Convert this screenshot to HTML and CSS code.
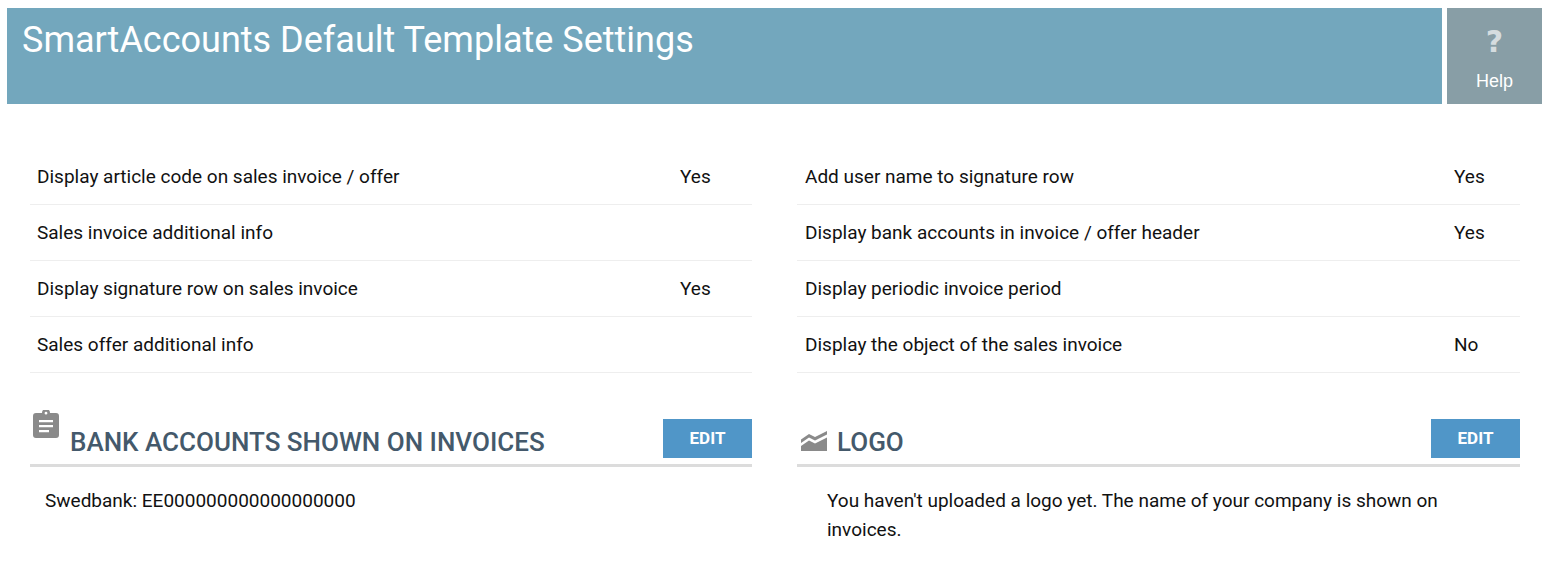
FILE: index.html
```html
<!DOCTYPE html>
<html lang="en">
<head>
<meta charset="utf-8">
<title>SmartAccounts Default Template Settings</title>
<link rel="stylesheet" href="styles.css">
</head>
<body>
<header class="top">
  <h1 class="title">SmartAccounts Default Template Settings</h1>
  <a class="help"><span class="help-mark">?</span><span class="help-label">Help</span></a>
</header>
<main class="columns">
  <section class="col">
    <div class="rows">
      <div class="row"><span class="label">Display article code on sales invoice / offer</span><span class="value">Yes</span></div>
      <div class="row"><span class="label">Sales invoice additional info</span><span class="value"></span></div>
      <div class="row"><span class="label">Display signature row on sales invoice</span><span class="value">Yes</span></div>
      <div class="row"><span class="label">Sales offer additional info</span><span class="value"></span></div>
    </div>
    <div class="sec-head">
      <svg class="icon icon-clip" viewBox="0 0 26 28"><path fill="#8a8a8a" fill-rule="evenodd" d="M3 3h6a4 4 0 0 1 8 0h6a3 3 0 0 1 3 3v19a3 3 0 0 1-3 3H3a3 3 0 0 1-3-3V6a3 3 0 0 1 3-3zM13 1.800a1.400 1.400 0 1 0 0 2.800 1.400 1.400 0 0 0 0-2.800zM6 10v2.200h14V10zM6 15v2.200h14V15zM6 20v2.200h10V20z"/></svg>
      <h2 class="sec-title">BANK ACCOUNTS SHOWN ON INVOICES</h2>
      <a class="edit">EDIT</a>
    </div>
    <p class="sec-body sec-body-bank">Swedbank: EE000000000000000000</p>
  </section>
  <section class="col">
    <div class="rows">
      <div class="row"><span class="label">Add user name to signature row</span><span class="value value-r">Yes</span></div>
      <div class="row"><span class="label">Display bank accounts in invoice / offer header</span><span class="value value-r">Yes</span></div>
      <div class="row"><span class="label">Display periodic invoice period</span><span class="value value-r"></span></div>
      <div class="row"><span class="label">Display the object of the sales invoice</span><span class="value value-r">No</span></div>
    </div>
    <div class="sec-head">
      <svg class="icon icon-chart" viewBox="0 0 26 20"><path fill="#8a8a8a" d="M0 8.500 8 3l6 3 12-6v3.500L14 9.500l-6-3-8 5.500zM0 15l8-5.500 6 3 12-6V20H0z"/></svg>
      <h2 class="sec-title">LOGO</h2>
      <a class="edit">EDIT</a>
    </div>
    <p class="sec-body sec-body-logo">You haven't uploaded a logo yet. The name of your company is shown on invoices.</p>
  </section>
</main>
</body>
</html>
```
FILE: styles.css
```css
* { box-sizing: border-box; }
html, body { margin: 0; padding: 0; background: #fff; }
body {
  font-family: Roboto, "Liberation Sans", sans-serif;
  color: #111;
  padding: 8px 10px 0 7px;
  height: 584px;
  overflow: hidden;
}
.top { display: flex; gap: 5px; height: 96px; }
.title {
  flex: 1;
  margin: 0;
  background: #73a7bd;
  color: #fff;
  font-size: 36px;
  font-weight: 400;
  line-height: 42px;
  padding: 11px 15px 0;
}
.help {
  width: 95px;
  background: #889ea6;
  color: #fff;
  display: flex;
  flex-direction: column;
  align-items: center;
}
.help-mark {
  font-family: "DejaVu Sans", sans-serif;
  font-weight: 700;
  font-size: 30px;
  line-height: 36px;
  margin-top: 16px;
  color: #d5dcdf;
}
.help-label { font-size: 18px; line-height: 22px; margin-top: 10px; font-family: "Liberation Sans", sans-serif; }
.columns {
  display: grid;
  grid-template-columns: 722px 723px;
  column-gap: 45px;
  padding: 45px 0 0 23px;
}
.rows { display: flex; flex-direction: column; }
.row {
  display: flex;
  height: 56px;
  align-items: center;
  padding: 0 0 0 7px;
  border-bottom: 1px solid #eee;
  font-size: 19px;
  letter-spacing: 0;
}
.label { width: 643px; }
.value { flex: 1; }
.col:nth-child(2) .row { padding-left: 8px; }
.col:nth-child(2) .label { width: 649px; }
.sec-head {
  display: flex;
  align-items: flex-end;
  height: 94px;
  border-bottom: 3px solid #dcdcdc;
  position: relative;
}
.icon { display: block; flex: none; }
.icon-clip { width: 26px; height: 28px; margin: 0 11px 26px 3px; }
.icon-chart { width: 26px; height: 20px; margin: 0 10px 13px 4px; }
.sec-title {
  margin: 0;
  flex: 1;
  font-size: 26px;
  font-weight: 500;
  color: #44596b;
  line-height: 30px;
  padding-bottom: 7px;
}
.edit {
  width: 89px;
  height: 39px;
  margin-bottom: 6px;
  background: #5096c8;
  color: #fff;
  font-size: 17px;
  font-weight: 700;
  line-height: 39px;
  text-align: center;
}
.sec-body { margin: 0; font-size: 19px; line-height: 29px; padding-top: 19px; }
.sec-body-bank { padding-left: 15px; }
.sec-body-logo { padding-left: 30px; padding-right: 60px; }
```
